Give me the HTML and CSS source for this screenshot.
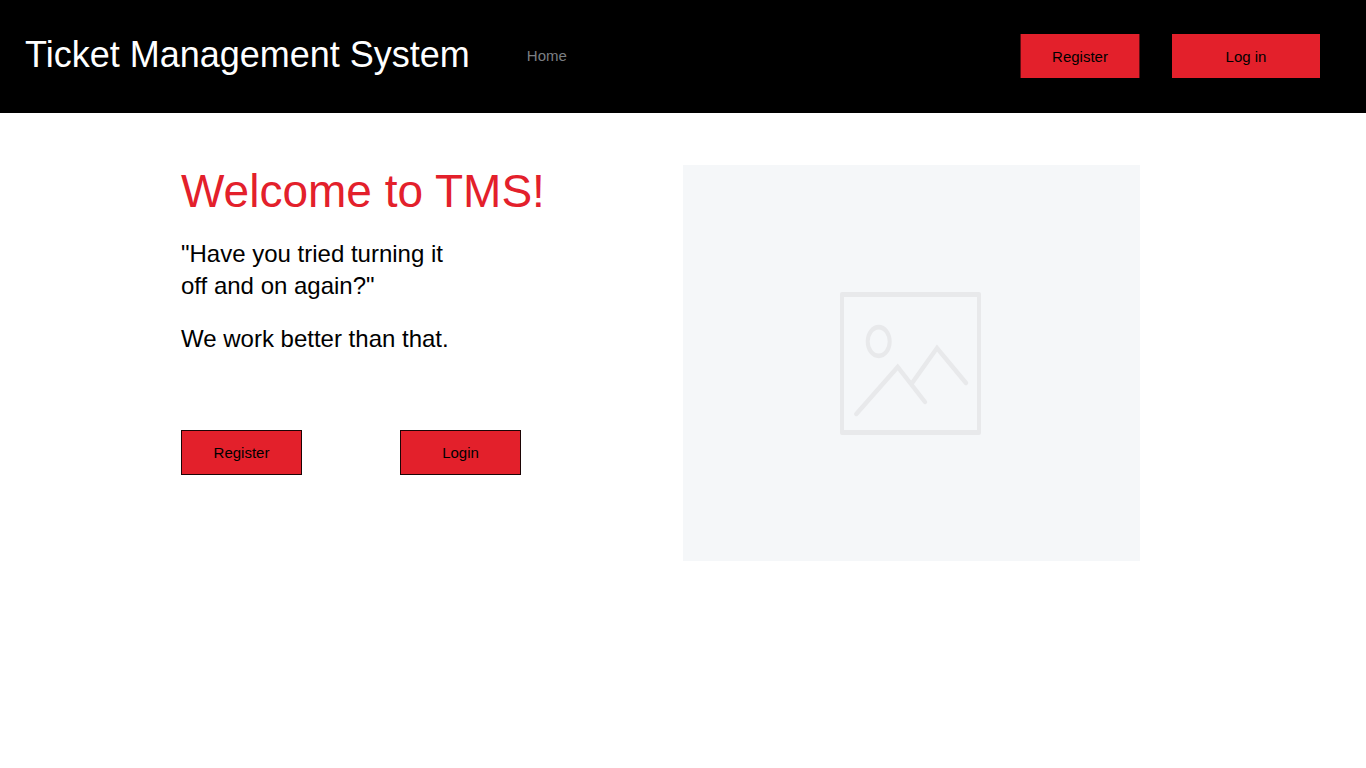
FILE: index.html
```html
<!DOCTYPE html>
<html lang="en">
<head>
  <meta charset="utf-8">
  <meta name="viewport" content="width=device-width, initial-scale=1">
  <title>Ticket Management System</title>
  <link rel="stylesheet" href="styles.css">
</head>
<body>
  <header class="site-header">
    <div class="brand">Ticket Management System</div>
    <nav class="site-nav">
      <a class="nav-link" href="#">Home</a>
    </nav>
    <div class="header-actions">
      <button class="button button-dark" type="button">Register</button>
      <button class="button button-wide" type="button">Log in</button>
    </div>
  </header>
  <main class="hero">
    <section class="intro">
      <h1 class="title">Welcome to TMS!</h1>
      <p class="lead">"Have you tried turning it<br>off and on again?"</p>
      <p class="lead">We work better than that.</p>
      <div class="intro-actions">
        <button class="button button-outlined" type="button">Register</button>
        <button class="button button-outlined" type="button">Login</button>
      </div>
    </section>
    <div class="picture">
      <svg class="picture-icon" viewBox="0 0 141 143" fill="none" stroke="#e8e9eb" stroke-width="4.4" stroke-linecap="round" role="img" aria-label="Image placeholder">
        <path fill="#e8e9eb" stroke="none" fill-rule="evenodd" d="M2 0H139Q141 0 141 2V141Q141 143 139 143H2Q0 143 0 141V2Q0 0 2 0ZM4 5V138H137V5Z"/>
        <path fill="#e8e9eb" stroke="none" fill-rule="evenodd" d="M25.700 49.500a13 16.700 0 1 0 26 0a13 16.700 0 1 0 -26 0ZM29.700 49.500a9 12 0 1 0 18 0a9 12 0 1 0 -18 0Z"/>
        <path d="M16.300 122L57.700 75L85 110"/>
        <path d="M72.300 90.700L97 56L126 91"/>
      </svg>
    </div>
  </main>
</body>
</html>
```
FILE: styles.css
```css
* {
  box-sizing: border-box;
}

body {
  margin: 0;
  background: #fff;
  color: #000;
  font-family: "Liberation Sans", Arial, sans-serif;
}

.site-header {
  display: flex;
  align-items: center;
  padding: 34px 46px 35px 25px;
  background: #000;
}

.brand {
  color: #fff;
  font-size: 36px;
  line-height: 40px;
  padding-bottom: 2px;
}

.site-nav {
  margin-left: 57px;
}

.nav-link {
  color: #7b7f83;
  font-size: 15px;
  text-decoration: none;
}

.header-actions {
  display: flex;
  align-items: center;
  gap: 32px;
  margin-left: auto;
}

.button {
  min-width: 120px;
  height: 44px;
  padding: 0 16px;
  border: 0;
  border-radius: 0;
  background: #e3202b;
  color: #000;
  font-family: inherit;
  font-size: 15px;
  cursor: pointer;
}

.button-dark {
  border: solid #5f0d12;
  border-width: 0 1px;
}

.button-wide {
  min-width: 148px;
}

.button-outlined {
  min-width: 121px;
  height: 45px;
  border: 1px solid #1c0405;
}

.hero {
  display: grid;
  grid-template-columns: 502fr 457fr;
  margin: 52px 226px 0 181px;
}

.title {
  margin: 0 0 21px;
  color: #e3202b;
  font-size: 46px;
  font-weight: 400;
  line-height: 52px;
}

.lead {
  margin: 0 0 21px;
  font-size: 24px;
  line-height: 32px;
}

.intro-actions {
  display: flex;
  gap: 98px;
  padding-top: 54px;
}

.picture {
  display: flex;
  align-items: center;
  justify-content: center;
  min-height: 396px;
  padding-right: 2px;
  background: #f5f7f9;
}

.picture-icon {
  width: 141px;
  height: 143px;
}
```
